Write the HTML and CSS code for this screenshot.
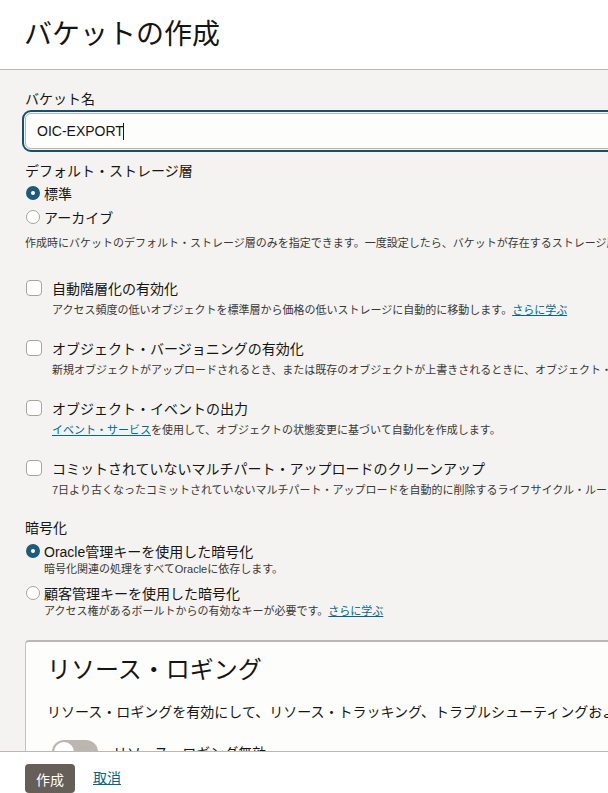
FILE: index.html
```html
<!DOCTYPE html>
<html lang="ja">
<head>
    <meta charset="UTF-8">
    <meta name="viewport" content="width=device-width, initial-scale=1.0">
    <title>バケットの作成</title>
    <link rel="stylesheet" href="styles.css">
</head>
<body>
    <header class="panel-header">
        <h1>バケットの作成</h1>
    </header>

    <main class="panel-body">
        <label class="field-label" for="bucket-name">バケット名</label>
        <div class="text-field">
            <input type="text" id="bucket-name" value="OIC-EXPORT"><span class="caret"></span>
        </div>

        <div class="field-label tier-label">デフォルト・ストレージ層</div>
        <div class="radio-row"><input type="radio" name="tier" checked><span>標準</span></div>
        <div class="radio-row"><input type="radio" name="tier"><span>アーカイブ</span></div>
        <p class="hint tier-hint">作成時にバケットのデフォルト・ストレージ層のみを指定できます。一度設定したら、バケットが存在するストレージ層を変更することはできません。</p>

        <div class="check-block">
            <div class="check-row"><input type="checkbox"><span>自動階層化の有効化</span></div>
            <p class="hint">アクセス頻度の低いオブジェクトを標準層から価格の低いストレージに自動的に移動します。<a href="#">さらに学ぶ</a></p>
        </div>
        <div class="check-block">
            <div class="check-row"><input type="checkbox"><span>オブジェクト・バージョニングの有効化</span></div>
            <p class="hint">新規オブジェクトがアップロードされるとき、または既存のオブジェクトが上書きされるときに、オブジェクト・バージョンを作成します。</p>
        </div>
        <div class="check-block">
            <div class="check-row"><input type="checkbox"><span>オブジェクト・イベントの出力</span></div>
            <p class="hint"><a href="#">イベント・サービス</a>を使用して、オブジェクトの状態変更に基づいて自動化を作成します。</p>
        </div>
        <div class="check-block">
            <div class="check-row"><input type="checkbox"><span>コミットされていないマルチパート・アップロードのクリーンアップ</span></div>
            <p class="hint">7日より古くなったコミットされていないマルチパート・アップロードを自動的に削除するライフサイクル・ルールを作成します。</p>
        </div>

        <div class="field-label crypt-label">暗号化</div>
        <div class="radio-row short"><input type="radio" name="crypt" checked><span>Oracle管理キーを使用した暗号化</span></div>
        <p class="hint sub">暗号化関連の処理をすべてOracleに依存します。</p>
        <div class="radio-row short gap"><input type="radio" name="crypt"><span>顧客管理キーを使用した暗号化</span></div>
        <p class="hint sub">アクセス権があるボールトからの有効なキーが必要です。<a href="#">さらに学ぶ</a></p>

        <section class="card">
            <h2>リソース・ロギング</h2>
            <p class="card-text">リソース・ロギングを有効にして、リソース・トラッキング、トラブルシューティングおよび監査のためのログを収集します。</p>
            <div class="toggle-row">
                <span class="toggle"><span class="knob"></span></span>
                <span>リソース・ロギング無効</span>
            </div>
        </section>
    </main>

    <footer class="panel-footer">
        <button class="btn-primary">作成</button>
        <a href="#" class="cancel">取消</a>
    </footer>
</body>
</html>
```

FILE: styles.css
```css
html, body {
    margin: 0;
    padding: 0;
}
body {
    font-family: "Liberation Sans", "Noto Sans CJK JP", sans-serif;
    font-size: 14px;
    color: #161513;
    background: #f4f3f1;
    overflow: hidden;
    height: 793px;
}
a {
    color: #00688c;
    text-decoration: underline;
}
.panel-header {
    height: 69px;
    background: #fff;
    border-bottom: 1px solid #bcb8b4;
    display: flex;
    align-items: center;
    padding-left: 24px;
}
.panel-header h1 {
    margin: 0;
    font-size: 28px;
    font-weight: normal;
    line-height: 36px;
}
.panel-body {
    width: 1000px;
    padding: 19px 0 0 25px;
}
.field-label {
    display: block;
    line-height: 20px;
    margin-bottom: 4px;
}
.text-field {
    position: relative;
    display: flex;
    align-items: center;
    height: 36px;
    box-sizing: border-box;
    border: 1px solid #b9b5b0;
    border-radius: 6px;
    background: #fdfdfc;
    outline: 2px solid #1a4f68;
    outline-offset: 1px;
}
.text-field input {
    border: none;
    background: transparent;
    font: inherit;
    font-size: 14px;
    color: #161513;
    padding: 0 0 0 11px;
    width: 86px;
    outline: none;
}
.caret {
    width: 1px;
    height: 17px;
    background: #161513;
}
.tier-label {
    margin-top: 13px;
    margin-bottom: 0;
    line-height: 19px;
}
.radio-row {
    display: flex;
    align-items: center;
    height: 24px;
    margin-left: 1px;
}
.radio-row.short {
    height: 20px;
}
.radio-row.gap {
    margin-top: 6px;
}
.radio-row span {
    margin-left: 4px;
}
input[type="radio"] {
    appearance: none;
    margin: 0;
    width: 14px;
    height: 14px;
    border-radius: 50%;
    border: 1px solid #a9a39e;
    background: #fff;
    box-sizing: border-box;
}
input[type="radio"]:checked {
    border: 5px solid #1e5b78;
    background: #fff;
}
.hint {
    margin: 0;
    font-size: 11px;
    line-height: 16px;
    color: #3a3836;
    white-space: nowrap;
}
.tier-hint {
    margin-top: 6px;
}
.hint.sub {
    margin-left: 19px;
}
.check-block {
    margin-top: 27px;
    margin-left: 1px;
}
.check-block + .check-block {
    margin-top: 20px;
}
.check-row {
    display: flex;
    align-items: center;
    height: 20px;
    margin-bottom: 4px;
}
.check-row span {
    margin-left: 10px;
}
.check-block .hint {
    margin-left: 26px;
}
input[type="checkbox"] {
    appearance: none;
    margin: 0;
    width: 16px;
    height: 16px;
    border: 1px solid #a9a39e;
    border-radius: 4px;
    background: #fff;
    box-sizing: border-box;
}
.crypt-label {
    margin-top: 20px;
    margin-bottom: 3px;
}
.card {
    margin-top: 21px;
    background: #fdfdfc;
    border: 1px solid #c6c1bb;
    border-top: 2px solid #bcb6b0;
    border-radius: 4px 0 0 0;
    padding: 12px 0 60px 21px;
}
.card h2 {
    margin: 0;
    font-size: 24px;
    font-weight: normal;
    line-height: 32px;
}
.card-text {
    margin: 16px 0 0;
    line-height: 20px;
    white-space: nowrap;
}
.toggle-row {
    display: flex;
    align-items: center;
    gap: 15px;
    margin-top: 18px;
    margin-left: 5px;
}
.toggle {
    position: relative;
    width: 46px;
    height: 24px;
    border-radius: 12px;
    background: #bcb6b0;
}
.knob {
    position: absolute;
    left: 2px;
    top: 2px;
    width: 20px;
    height: 20px;
    border-radius: 50%;
    background: #fff;
}
.panel-footer {
    position: fixed;
    left: 0;
    right: 0;
    bottom: 0;
    height: 42px;
    background: #fff;
    border-top: 1px solid #bcb8b4;
    display: flex;
    align-items: flex-start;
    padding: 12px 0 0 25px;
    box-sizing: border-box;
    gap: 18px;
}
.btn-primary {
    height: 29px;
    width: 50px;
    border: none;
    border-radius: 4px;
    background: #665e58;
    color: #fff;
    font: inherit;
    font-size: 14px;
    padding: 0;
}
.cancel {
    line-height: 29px;
}
```
